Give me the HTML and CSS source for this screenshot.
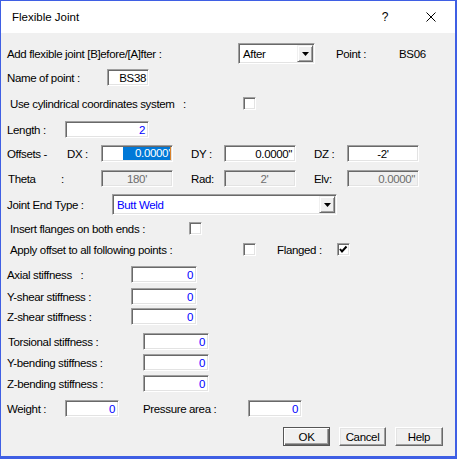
FILE: index.html
```html
<!DOCTYPE html>
<html>
<head>
<meta charset="utf-8">
<link rel="stylesheet" href="styles.css">
</head>
<body>
<div class="dialog">
  <div class="titlebar">
    <span class="title">Flexible Joint</span>
    <span class="help-btn">?</span>
    <svg class="close-btn" width="10" height="10" viewBox="0 0 10 10"><path d="M0.5 0.5 L9.5 9.5 M9.5 0.5 L0.5 9.5" stroke="#000" stroke-width="1" fill="none"/></svg>
  </div>
  <div class="content">
    <div class="row tall r1">
      <span class="lbl w-add">Add flexible joint [B]efore/[A]fter :</span>
      <div class="combo combo-after"><span class="combo-text">After</span><span class="combo-btn"><svg width="7" height="4" viewBox="0 0 7 4"><path d="M0 0 H7 L3.5 4 Z" fill="#000"/></svg></span></div>
      <span class="lbl w-point">Point :</span>
      <span class="lbl">BS06</span>
    </div>
    <div class="row r2">
      <span class="lbl w-name">Name of point :</span>
      <div class="field w-bs38">BS38</div>
    </div>
    <div class="row r3">
      <span class="lbl indent w-cyl">Use cylindrical coordinates system   :</span>
      <span class="check"></span>
    </div>
    <div class="row r4">
      <span class="lbl w-length">Length :</span>
      <div class="field blue w-len">2</div>
    </div>
    <div class="row r5">
      <span class="lbl w-offsets">Offsets -</span>
      <span class="lbl w-dx">DX :</span>
      <div class="field coord dx"><span class="sel">0.0000'</span><span class="caret"></span></div>
      <span class="lbl w-axis">DY :</span>
      <div class="field coord">0.0000''</div>
      <span class="lbl w-axis">DZ :</span>
      <div class="field coord center">-2'</div>
    </div>
    <div class="row r6">
      <span class="lbl w-theta">Theta</span>
      <span class="lbl w-colon">:</span>
      <div class="field coord disabled center">180'</div>
      <span class="lbl w-axis">Rad:</span>
      <div class="field coord disabled center rad">2'</div>
      <span class="lbl w-axis">Elv:</span>
      <div class="field coord disabled">0.0000''</div>
    </div>
    <div class="row tall r7">
      <span class="lbl w-jet">Joint End Type :</span>
      <div class="combo combo-jet"><span class="combo-text blue-text">Butt Weld</span><span class="combo-btn"><svg width="7" height="4" viewBox="0 0 7 4"><path d="M0 0 H7 L3.5 4 Z" fill="#000"/></svg></span></div>
    </div>
    <div class="row r8">
      <span class="lbl indent w-insert">Insert flanges on both ends :</span>
      <span class="check"></span>
    </div>
    <div class="row r9">
      <span class="lbl indent w-apply">Apply offset to all following points :</span>
      <span class="check"></span>
      <span class="lbl w-flanged">Flanged :</span>
      <span class="check"><svg width="11" height="11" viewBox="0 0 11 11"><path d="M2 5 L4 7.5 L8.5 2.5" stroke="#000" stroke-width="2" fill="none"/></svg></span>
    </div>
    <div class="row r10">
      <span class="lbl w-stiff1">Axial stiffness   :</span>
      <div class="field blue w-stiff">0</div>
    </div>
    <div class="row r11">
      <span class="lbl w-stiff1">Y-shear stiffness :</span>
      <div class="field blue w-stiff">0</div>
    </div>
    <div class="row r12">
      <span class="lbl w-stiff1">Z-shear stiffness :</span>
      <div class="field blue w-stiff">0</div>
    </div>
    <div class="row r13">
      <span class="lbl w-stiff2 tors">Torsional stiffness :</span>
      <div class="field blue w-stiff">0</div>
    </div>
    <div class="row r14">
      <span class="lbl w-stiff2">Y-bending stiffness :</span>
      <div class="field blue w-stiff">0</div>
    </div>
    <div class="row r15">
      <span class="lbl w-stiff2">Z-bending stiffness :</span>
      <div class="field blue w-stiff">0</div>
    </div>
    <div class="row r16">
      <span class="lbl w-weight">Weight :</span>
      <div class="field blue w-small">0</div>
      <span class="lbl w-pressure">Pressure area :</span>
      <div class="field blue w-small">0</div>
    </div>
    <div class="buttons">
      <button class="btn default">OK</button>
      <button class="btn">Cancel</button>
      <button class="btn">Help</button>
    </div>
  </div>
</div>
</body>
</html>
```

FILE: styles.css
```css
* { box-sizing: border-box; }
html, body { margin: 0; padding: 0; }
body {
  background: #3f5fe4;
  width: 457px;
  height: 459px;
  overflow: hidden;
  font-family: "Liberation Sans", Arial, sans-serif;
  font-size: 11.5px;
  letter-spacing: -0.35px;
  color: #000;
}
.dialog {
  margin: 1px 0 0 1px;
  width: 454px;
  height: 455px;
  background: #f0f0f0;
  display: flex;
  flex-direction: column;
}
.titlebar {
  height: 32px;
  background: #fff;
  display: flex;
  align-items: center;
  padding-left: 11px;
  padding-right: 19px;
}
.title { flex: 1; font-size: 11.5px; letter-spacing: 0; }
.help-btn { width: 12px; text-align: center; margin-right: 35px; font-size: 12px; letter-spacing: 0; }
.close-btn { display: block; }

.content { padding-left: 6px; display: flex; flex-direction: column; }
.row { display: flex; align-items: center; height: 17px; }
.row.tall { height: 21px; }
.lbl { white-space: pre; flex: none; }
.indent { margin-left: 3px; }

.r1 { margin-top: 10px; }
.r2 { margin-top: 5px; }
.r3 { margin-top: 9px; }
.r4 { margin-top: 9px; }
.r5 { margin-top: 7px; }
.r6 { margin-top: 8px; }
.r7 { margin-top: 7px; }
.r8 { margin-top: 5px; }
.r9 { margin-top: 4px; }
.r10 { margin-top: 8px; }
.r11 { margin-top: 5px; }
.r12 { margin-top: 3px; }
.r13 { margin-top: 8px; }
.r14 { margin-top: 4px; }
.r15 { margin-top: 4px; }
.r16 { margin-top: 8px; }

.w-add { width: 231px; }
.w-point { margin-left: 21px; width: 63px; }
.w-name { width: 100px; }
.w-cyl { width: 233px; }
.w-length { width: 58px; }
.w-offsets { width: 60px; }
.w-dx { width: 34px; }
.w-axis { margin-left: 18px; width: 33px; }
.w-theta { margin-left: 1px; width: 53px; }
.w-colon { width: 40px; }
.w-jet { width: 105px; }
.w-insert { width: 179px; }
.w-apply { width: 233px; }
.w-flanged { margin-left: 21px; width: 60px; }
.w-stiff1 { width: 124px; }
.w-stiff2 { width: 136px; }
.tors { padding-left: 1px; }
.w-weight { width: 58px; }
.w-pressure { margin-left: 24px; width: 105px; }

.field {
  height: 17px;
  background: #fff;
  border: 1px solid;
  border-color: #a0a0a0 #fff #fff #a0a0a0;
  box-shadow: inset 1px 1px 0 #696969, inset -1px -1px 0 #e3e3e3;
  display: flex;
  align-items: center;
  justify-content: flex-end;
  padding-right: 3px;
  white-space: pre;
  flex: none;
}
.w-bs38 { width: 42px; padding-right: 2px; }
.w-len { width: 84px; }
.coord { width: 72px; }
.w-stiff { width: 66px; }
.w-small { width: 54px; }
.blue { color: #0000ff; }
.blue-text { color: #0000ff; }
.center { justify-content: center; padding-right: 0; }
.rad { padding-left: 9px; }
.disabled { background: #f0f0f0; color: #6d6d6d; }
.dx { padding-right: 1px; }
.sel {
  background: #0078d7;
  color: #fff;
  height: 13px;
  line-height: 13px;
  padding-left: 12px;
}
.caret { width: 1px; height: 13px; background: #d9822b; }

.combo {
  height: 21px;
  background: #fff;
  border: 1px solid;
  border-color: #a0a0a0 #fff #fff #a0a0a0;
  box-shadow: inset 1px 1px 0 #696969, inset -1px -1px 0 #e3e3e3;
  display: flex;
  align-items: center;
  padding: 1px;
  flex: none;
}
.combo-after { width: 77px; }
.combo-jet { width: 225px; }
.combo-text { flex: 1; padding-left: 3px; }
.combo-btn {
  width: 16px;
  height: 17px;
  background: #f0f0f0;
  border: 1px solid;
  border-color: #f0f0f0 #696969 #696969 #f0f0f0;
  box-shadow: inset 1px 1px 0 #fff, inset -1px -1px 0 #a0a0a0;
  display: flex;
  align-items: center;
  justify-content: center;
}
.combo-btn svg { display: block; margin-top: 1px; }

.check {
  width: 13px;
  height: 13px;
  background: #fff;
  border: 1px solid;
  border-color: #a0a0a0 #fff #fff #a0a0a0;
  box-shadow: inset 1px 1px 0 #696969, inset -1px -1px 0 #e3e3e3;
  flex: none;
  display: flex;
  align-items: center;
  justify-content: center;
}
.check svg { display: block; }

.buttons {
  margin-top: 10px;
  display: flex;
  justify-content: flex-end;
  gap: 9px;
  padding-right: 12px;
}
.btn {
  width: 47px;
  height: 19px;
  font-family: "Liberation Sans", Arial, sans-serif;
  font-size: 11.5px;
  letter-spacing: -0.35px;
  color: #000;
  background: #f0f0f0;
  border: 1px solid;
  border-color: #fff #696969 #696969 #fff;
  box-shadow: inset -1px -1px 0 #a0a0a0, inset 1px 1px 0 #e3e3e3;
  padding: 0;
  margin: 0;
}
.btn:last-child { width: 48px; }
.btn.default {
  border-color: #555;
  box-shadow: inset 1px 1px 0 #fff, inset -1px -1px 0 #696969, inset -2px -2px 0 #a0a0a0;
}
```
